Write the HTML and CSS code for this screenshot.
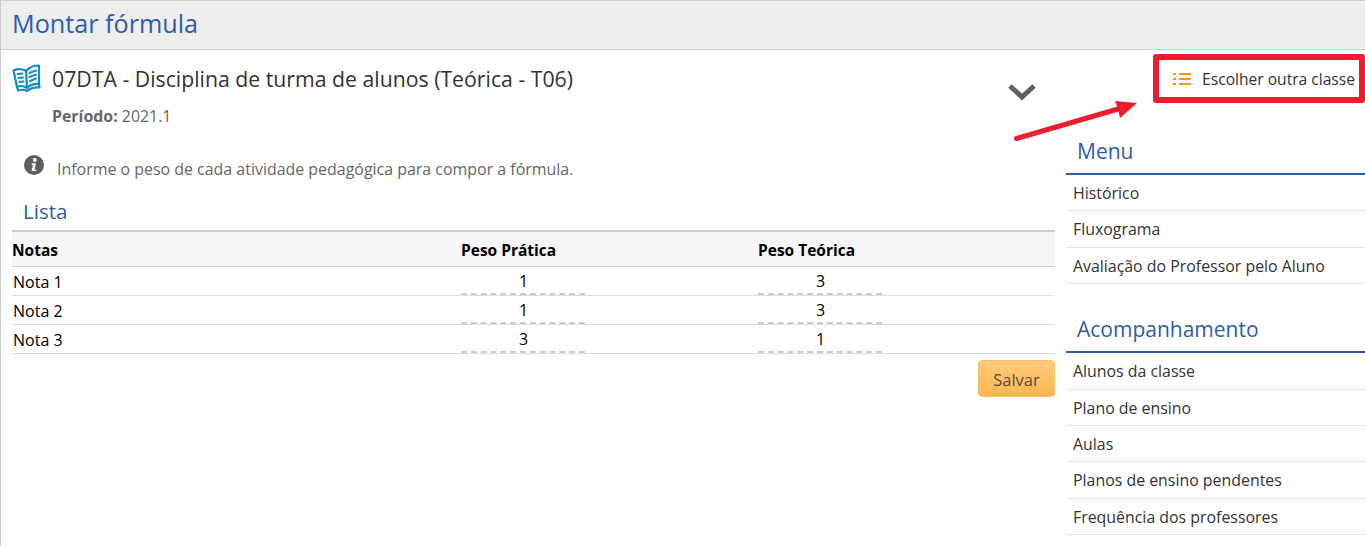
FILE: index.html
```html
<!DOCTYPE html>
<html lang="pt-BR">
<head>
    <meta charset="UTF-8">
    <title>Montar fórmula</title>
    <link rel="stylesheet" href="styles.css">
</head>
<body>
    <div class="page">
        <header class="page-header">
            <h1>Montar fórmula</h1>
        </header>
        <div class="page-body">
            <main class="content">
                <div class="class-info">
                    <div class="class-title">
                        <svg class="book-icon" width="30" height="28" viewBox="0 0 30 28" fill="none" stroke="#0f8fc4" stroke-width="2.200" stroke-linejoin="round" stroke-linecap="round">
                            <path d="M14 7C11.500 5 6 4.500 1.500 6.500L5 23C8 21.500 12 22 15 24C18 21 23 19.500 27 20L27 1.500C22 1.500 17 3.500 14 7Z"/>
                            <path d="M14 7L15 24"/>
                            <path d="M5 23L6 26.500C9 25.500 12.500 25.500 15 27C18 24.500 23 23 27.500 23.500L27 20"/>
                            <path d="M5.500 10L10.500 9.500M6.500 14L11 13.500M7.500 18L11.500 17.500M17.500 9L24 6.500M17.500 13L24 10.500M18 17L24 14.500" stroke-width="2"/>
                        </svg>
                        <h2>07DTA - Disciplina de turma de alunos (Teórica - T06)</h2>
                    </div>
                    <svg class="chevron" width="28" height="18" viewBox="0 0 28 18" fill="none" stroke="#5f6066" stroke-width="5">
                        <path d="M2 3L14 14L26 3"/>
                    </svg>
                </div>
                <p class="period"><b>Período:</b> 2021.1</p>
                <div class="notice">
                    <svg class="info-icon" width="20" height="20" viewBox="0 0 20 20">
                        <circle cx="10" cy="10" r="10" fill="#5f5f5f"/>
                        <circle cx="10.800" cy="5" r="1.900" fill="#fff"/>
                        <path d="M7.800 8.300H12L10.500 14.400H12.200V16H7.500L9 9.900H7.800Z" fill="#fff"/>
                    </svg>
                    <span>Informe o peso de cada atividade pedagógica para compor a fórmula.</span>
                </div>
                <h3 class="list-title">Lista</h3>
                <table class="grades">
                    <thead>
                        <tr>
                            <th>Notas</th>
                            <th>Peso Prática</th>
                            <th>Peso Teórica</th>
                        </tr>
                    </thead>
                    <tbody>
                        <tr>
                            <td>Nota 1</td>
                            <td><span class="weight">1</span></td>
                            <td><span class="weight">3</span></td>
                        </tr>
                        <tr>
                            <td>Nota 2</td>
                            <td><span class="weight">1</span></td>
                            <td><span class="weight">3</span></td>
                        </tr>
                        <tr>
                            <td>Nota 3</td>
                            <td><span class="weight">3</span></td>
                            <td><span class="weight">1</span></td>
                        </tr>
                    </tbody>
                </table>
                <div class="actions">
                    <button class="save-button">Salvar</button>
                </div>
            </main>
            <aside class="sidebar">
                <div class="choose-class">
                    <svg width="18" height="14" viewBox="0 0 18 14" fill="#f7990c">
                        <rect x="0" y="1" width="3" height="2"/>
                        <rect x="0" y="6" width="3" height="2"/>
                        <rect x="0" y="11" width="3" height="2"/>
                        <rect x="6" y="1" width="12" height="2"/>
                        <rect x="6" y="6" width="12" height="2"/>
                        <rect x="6" y="11" width="12" height="2"/>
                    </svg>
                    <span>Escolher outra classe</span>
                </div>
                <section class="side-section">
                    <h3>Menu</h3>
                    <ul>
                        <li>Histórico</li>
                        <li>Fluxograma</li>
                        <li>Avaliação do Professor pelo Aluno</li>
                    </ul>
                </section>
                <section class="side-section">
                    <h3>Acompanhamento</h3>
                    <ul>
                        <li>Alunos da classe</li>
                        <li>Plano de ensino</li>
                        <li>Aulas</li>
                        <li>Planos de ensino pendentes</li>
                        <li>Frequência dos professores</li>
                    </ul>
                </section>
            </aside>
        </div>
    </div>

    <!-- marcacao em vermelho por cima da tela -->
    <div class="mark-box"></div>
    <svg class="mark-arrow" width="130" height="50" viewBox="0 0 130 50">
        <path d="M4.500 42.500L106 13" stroke="#ee1c2e" stroke-width="5" stroke-linecap="round" fill="none"/>
        <path d="M125 7L103 5L106 13L108 22Z" fill="#ee1c2e"/>
    </svg>
</body>
</html>
```

FILE: styles.css
```css
* {
    box-sizing: border-box;
}

html, body {
    margin: 0;
    height: 100%;
}

body {
    font-family: "Open Sans", "Noto Sans", sans-serif;
    color: #333;
    background-color: white;
    overflow: hidden;
    position: relative;
}

.page {
    border-left: 1px solid #ccc;
    height: 546px;
    overflow: hidden;
}

.page-header {
    height: 50px;
    background-color: #eee;
    border-top: 1px solid #ccc;
    border-bottom: 1px solid #ccc;
    padding-left: 11px;
}

.page-header h1 {
    margin: 0;
    font-size: 25.200px;
    line-height: 44px;
    font-weight: 400;
    color: #2f5ca8;
}

.page-body {
    display: flex;
    gap: 11px;
}

.content {
    width: 1054px;
    padding-left: 11px;
    flex: none;
}

.class-info {
    display: flex;
    justify-content: space-between;
    padding-top: 14px;
    height: 56px;
}

.class-title {
    display: flex;
    gap: 10px;
}

.class-title h2 {
    margin: 0;
    font-size: 21.250px;
    line-height: 30px;
    font-weight: 400;
    color: #333;
}

.chevron {
    margin: 19px 19px 0 0;
}

.period {
    margin: 0;
    padding-left: 40px;
    font-size: 15.900px;
    line-height: 20px;
    color: #666;
}

.notice {
    display: flex;
    align-items: center;
    gap: 13px;
    margin: 28px 0 0 12px;
    height: 30px;
    font-size: 15.950px;
    color: #666;
}

.info-icon {
    margin-top: -8px;
}

.list-title {
    margin: 12px 0 0 11px;
    font-size: 20.500px;
    line-height: 30px;
    font-weight: 400;
    color: #2f5ca8;
}

.grades {
    width: 1043px;
    margin-top: 4px;
    border-collapse: collapse;
    table-layout: fixed;
    color: black;
}

.grades th {
    height: 35px;
    background-color: #f6f6f6;
    border-top: 2px solid #ccc;
    border-bottom: 1px solid #ccc;
    padding: 2px 0 0;
    text-align: left;
    font-size: 15.500px;
    font-weight: 700;
}

.grades th:first-child {
    width: 449px;
}

.grades th:nth-child(2) {
    width: 297px;
}

.grades td {
    height: 29px;
    border-bottom: 1px solid #ddd;
    padding: 0;
    font-size: 16px;
}

.grades td:first-child {
    padding: 2px 0 0 1px;
}

.weight {
    display: block;
    width: 124px;
    height: 28px;
    line-height: 29px;
    padding-left: 1px;
    text-align: center;
    border-bottom: 2px dashed #ccc;
}

.actions {
    display: flex;
    justify-content: flex-end;
    width: 1043px;
    margin-top: 6px;
}

.save-button {
    width: 77px;
    height: 37px;
    padding: 2px 0 0;
    background: linear-gradient(#ffcb80, #ffb64a);
    border: 1px solid #f8c064;
    border-radius: 4px;
    font-family: inherit;
    font-size: 16.500px;
    color: #4f4f4f;
}

.sidebar {
    flex: 1;
    min-width: 0;
}

.choose-class {
    display: flex;
    align-items: center;
    justify-content: flex-end;
    gap: 11px;
    height: 58px;
    padding: 0 10px 0 0;
    font-size: 15.600px;
    color: #333;
}

.side-section {
    margin-top: 28px;
}

.side-section:first-of-type {
    margin-top: 26px;
}

.side-section h3 {
    margin: 0;
    padding-left: 11px;
    height: 41px;
    line-height: 34px;
    font-size: 21px;
    font-weight: 400;
    color: #2f5ca8;
    border-bottom: 2px solid #2f5ca8;
}

.side-section ul {
    margin: 0;
    padding: 0;
    list-style: none;
}

.side-section li {
    height: 36.400px;
    line-height: 36px;
    padding-left: 7px;
    font-size: 15.900px;
    color: #333;
    border-bottom: 1px solid #e4e4e4;
}

.mark-box {
    position: absolute;
    left: 1153px;
    top: 54px;
    width: 212px;
    height: 49px;
    border: 6px solid #ee1c2e;
    border-radius: 3px;
}

.mark-arrow {
    position: absolute;
    left: 1012px;
    top: 96px;
}
```
